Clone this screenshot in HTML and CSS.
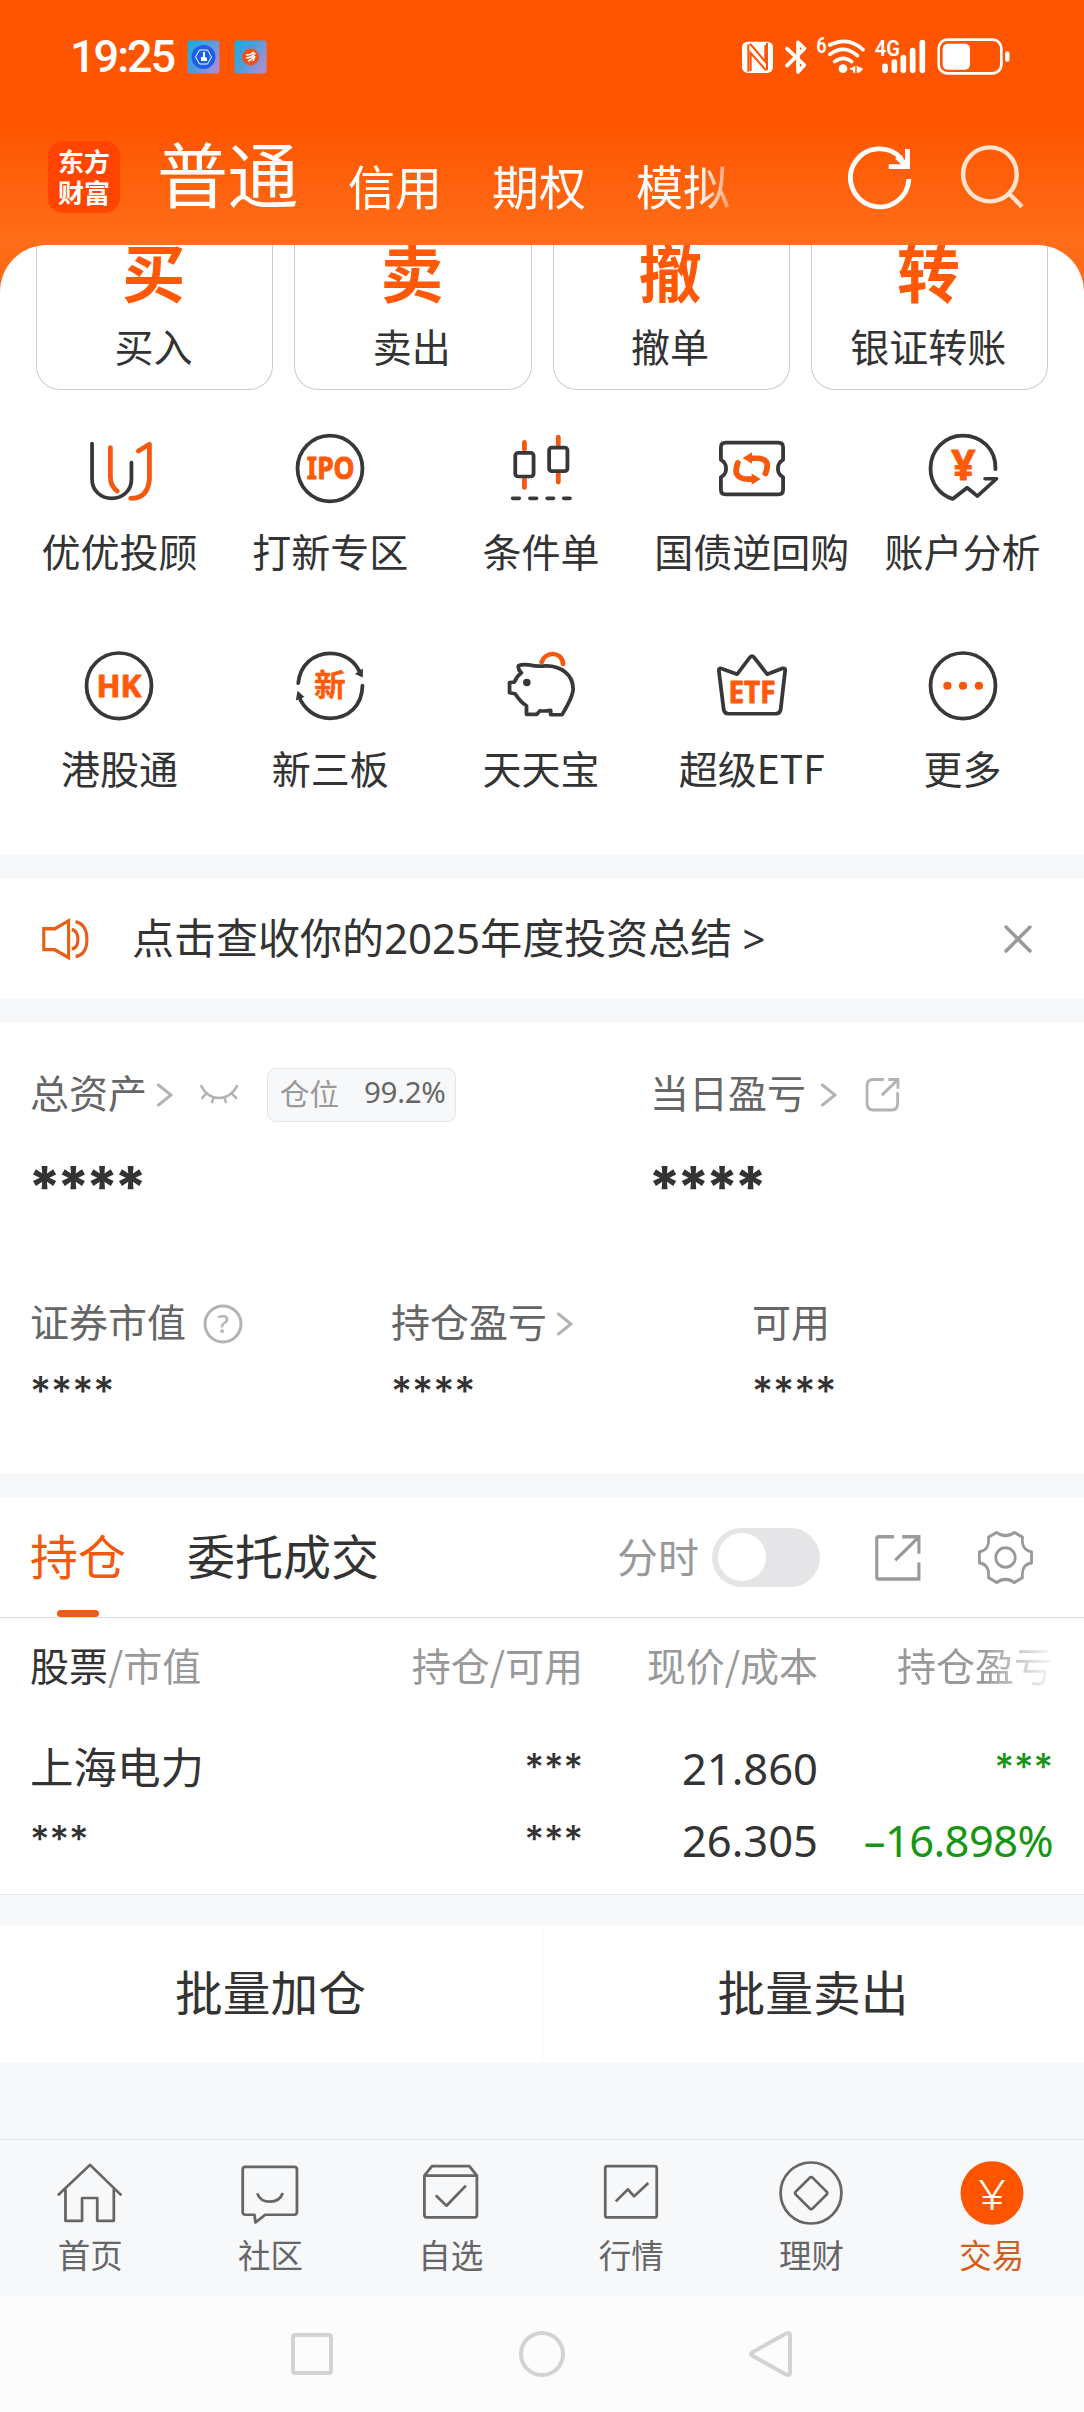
FILE: index.html
```html
<!DOCTYPE html>
<html lang="zh-CN">
<head>
<meta charset="utf-8">
<title>交易</title>
<link rel="stylesheet" href="styles.css">
</head>
<body>
<header class="hero">
  <div class="status">
    <span class="clock">19:25</span>
    <svg class="app-icons" viewBox="0 0 81 34">
      <defs>
        <linearGradient id="tile" x1="0" y1="0" x2="1" y2="0.6"><stop offset="0" stop-color="#12aee0"/><stop offset="0.5" stop-color="#4a9ddb"/><stop offset="1" stop-color="#a58fd2"/></linearGradient>
      </defs>
      <rect x="0.5" y="0.5" width="32" height="33" rx="3" fill="url(#tile)"/>
      <circle cx="16.5" cy="17" r="12" fill="#1d5fe8"/>
      <path d="M12.500 10h8l4 7-4 7h-8l-4-7z" fill="none" stroke="#fff"/>
      <path d="M16 12h2v5l2 1v3h-6v-4h2z" fill="#fff"/>
      <rect x="47.500" y="0.500" width="32" height="33" rx="3" fill="url(#tile)"/>
      <circle cx="63.500" cy="17" r="8.500" fill="#f2501d"/>
      <path d="M59 15q5 0 8-3M59 18q6 0 9-5M61 21q4-1 6-5M66 21l2-5" fill="none" stroke="#fff" stroke-width="1.500"/>
    </svg>
    <svg class="system-icons" viewBox="30 18 816 120">
      <rect x="36" y="32" width="93" height="94" rx="17" fill="#fff"/>
      <path d="M55 40V122M111 36V118M60 38L106 92V42M62 120V66L108 118" stroke="#ff5500" stroke-width="6" fill="none"/>
      <g fill="none" stroke="#fff" stroke-linecap="round" stroke-linejoin="round">
        <path d="M171 53L223 102L204 123V34L223 53L171 104" stroke-width="11"/>
        <path d="M299 42Q355 14 399 56M300 70Q343 38 382 74M314 92Q340 72 365 92" stroke-width="11"/>
        <path d="M465 106V118M493 93V118M520 80V118M548 59V118M577 35V118" stroke-width="17"/>
        <rect x="626" y="26" width="188" height="101" rx="26" stroke-width="8"/>
        <path d="M832 67V86" stroke-width="13"/>
      </g>
      <g fill="#fff">
        <circle cx="339" cy="113" r="13"/>
        <path d="M376 104V125H369V118L357 114ZM380 104L400 113L388 125H380Z"/>
        <rect x="638" y="38" width="82" height="78" rx="15"/>
        <text x="259" y="66" class="tiny" textLength="31" lengthAdjust="spacingAndGlyphs">6</text>
        <text x="434" y="75" class="tiny" textLength="76" lengthAdjust="spacingAndGlyphs">4G</text>
      </g>
    </svg>
  </div>
  <nav class="accounts">
    <div class="logo"><span>东方</span><span>财富</span></div>
    <div class="account-tabs">
      <span class="account current">普通</span>
      <span class="account">信用</span>
      <span class="account">期权</span>
      <span class="account">模拟</span>
    </div>
    <svg class="hero-icon refresh" viewBox="886 438 184 192" preserveAspectRatio="none" fill="none" stroke="#fff" stroke-width="14">
      <path d="M1061 537A84 87 0 1 1 1040 476"/><path d="M1057 447V500H1003"/><path d="M1028 470L1056 498" stroke-width="17"/>
    </svg>
    <svg class="hero-icon search" viewBox="1212 434 186 192" preserveAspectRatio="none" fill="none" stroke="#ffe3cf" stroke-width="13">
      <ellipse cx="1299" cy="522" rx="78" ry="81"/><path d="M1353 578L1392 619"/>
    </svg>
  </nav>
</header>

<main>
  <div class="sheet-back">
    <section class="sheet">
      <div class="quick">
        <div class="card"><b class="glyph">买</b><span class="label">买入</span></div>
        <div class="card"><b class="glyph">卖</b><span class="label">卖出</span></div>
        <div class="card"><b class="glyph">撤</b><span class="label">撤单</span></div>
        <div class="card"><b class="glyph">转</b><span class="label">银证转账</span></div>
      </div>
      <div class="tools">
        <div class="tool">
          <svg viewBox="237 97 220 220" preserveAspectRatio="none"><path class="ink" d="M269 132V240C269 275 296 297 326 297S383 275 383 240V189"/><path class="accent" d="M322 144V232Q322 260 342 275M403 154L435 134V240Q430 297 381 297"/></svg>
          <span class="label">优优投顾</span>
        </div>
        <div class="tool">
          <svg viewBox="847 97 220 220" preserveAspectRatio="none"><ellipse class="ink" cx="957" cy="207" rx="94" ry="99"/><text class="mark" x="890" y="240" font-size="93" textLength="138" lengthAdjust="spacingAndGlyphs">IPO</text></svg>
          <span class="label">打新专区</span>
        </div>
        <div class="tool">
          <svg viewBox="1457 97 220 220" preserveAspectRatio="none"><path class="accent" d="M1519 128V150M1519 240V264M1617 112V135M1617 223V248"/><rect class="ink" x="1492.500" y="160" width="53" height="71" rx="8"/><rect class="ink" x="1590.500" y="144" width="53" height="71" rx="8"/><path class="ink" d="M1485 297h19M1535 297h19M1585 297h18M1633 297h18"/></svg>
          <span class="label">条件单</span>
        </div>
        <div class="tool">
          <svg viewBox="501 97 220 220" preserveAspectRatio="none"><path class="ink" d="M535 129H687Q701 129 701 143V181Q686 189 686 207T701 233V271Q701 285 687 285H535Q521 285 521 271V233Q536 225 536 207T521 181V143Q521 129 535 129Z"/><path class="accent bold" d="M570 190Q552 238 600 239H612M650 222Q668 177 625 176H606"/><path class="solid" d="M584 175L611 158V193ZM636 239L610 222V256Z"/></svg>
          <span class="label">国债逆回购</span>
        </div>
        <div class="tool">
          <svg viewBox="1108 97 220 220" preserveAspectRatio="none"><path class="ink" d="M1312 209C1314 148 1270 108 1218 108S1124 150 1124 207C1124 252 1150 285 1188 299L1230 265L1260 290L1315 238H1282"/><text class="mark" x="1184" y="242" font-size="122" textLength="70" lengthAdjust="spacingAndGlyphs">¥</text></svg>
          <span class="label">账户分析</span>
        </div>
        <div class="tool">
          <svg viewBox="237 747 220 220" preserveAspectRatio="none"><ellipse class="ink" cx="347" cy="858" rx="94" ry="99"/><text class="mark" x="282" y="892" font-size="93" textLength="130" lengthAdjust="spacingAndGlyphs">HK</text></svg>
          <span class="label">港股通</span>
        </div>
        <div class="tool">
          <svg viewBox="847 747 220 220" preserveAspectRatio="none"><path class="ink" d="M865 850C870 795 910 760 957 760C1000 760 1032 785 1045 822M1051 857C1050 918 1010 956 957 956C912 956 880 925 867 890"/><path class="dark" d="M1052 806V833L1029 822ZM863 873L883 892L858 902Z"/><text class="mark cjk" x="911" y="890" font-size="92">新</text></svg>
          <span class="label">新三板</span>
        </div>
        <div class="tool">
          <svg viewBox="1457 747 220 220" preserveAspectRatio="none"><path class="ink" d="M1502 797Q1515 791 1545 797Q1565 800 1580 798C1625 797 1660 825 1660 867Q1660 890 1628 945H1595V932Q1575 935 1564 933L1555 944H1525V918Q1510 910 1492 882L1476 879V848L1490 847Q1496 830 1510 819Q1499 808 1502 797Z"/><circle class="dark" cx="1526" cy="848" r="11"/><path class="accent" d="M1569 786C1580 754 1626 752 1631 792"/></svg>
          <span class="label">天天宝</span>
        </div>
        <div class="tool">
          <svg viewBox="501 747 220 220" preserveAspectRatio="none"><path class="ink" d="M522 806L568 823L605 772Q611 766 617 772L655 823L700 805Q708 804 707 812L694 929Q692 942 680 942H543Q531 942 529 929L515 812Q515 804 522 806"/><text class="mark" x="543" y="909" font-size="91" textLength="136" lengthAdjust="spacingAndGlyphs">ETF</text></svg>
          <span class="label">超级ETF</span>
        </div>
        <div class="tool">
          <svg viewBox="1108 747 220 220" preserveAspectRatio="none"><ellipse class="ink" cx="1218" cy="858" rx="94" ry="99"/><circle class="solid" cx="1173" cy="858" r="12"/><circle class="solid" cx="1218" cy="858" r="12"/><circle class="solid" cx="1264" cy="858" r="12"/></svg>
          <span class="label">更多</span>
        </div>
      </div>
    </section>
  </div>

  <section class="notice">
    <svg class="speaker" viewBox="120 200 142 116" preserveAspectRatio="none" fill="none" stroke="#e85f18" stroke-width="9"><path d="M128 231H160L200 210V307L160 286H128ZM209 233Q227 236 227 259T209 284M220 212Q253 219 253 259T220 304"/></svg>
    <p class="notice-text">点击查收你的<span class="num">2025</span>年度投资总结<span class="num more"> &gt;</span></p>
    <svg class="close" viewBox="0 0 28 28" stroke="#999" stroke-width="3.500" stroke-linecap="round"><path d="M2 2l24 24M26 2L2 26"/></svg>
  </section>

  <section class="assets">
    <div class="totals">
      <div>
        <div class="caption"><span class="name">总资产</span>
          <svg class="chevron" viewBox="0 0 16 24"><path d="M1.500 2L14 12L1.500 22"/></svg>
          <svg class="eye" viewBox="576 644 116 54" preserveAspectRatio="none" fill="none" stroke="#b3b3b3" stroke-width="7"><path d="M581 647Q600 680 634 680T688 647M598 668L583 682M618 680L613 693M650 680L655 693M670 668L686 682"/></svg>
          <span class="tag">仓位<span class="num">99.2%</span></span>
        </div>
        <div class="big-stars">****</div>
      </div>
      <div>
        <div class="caption"><span class="name">当日盈亏</span>
          <svg class="chevron wide" viewBox="0 0 16 24"><path d="M1.500 2L14 12L1.500 22"/></svg>
          <svg class="open" viewBox="939 618 102 96" preserveAspectRatio="none" fill="none" stroke="#b3b3b3" stroke-width="8"><path d="M994 627H962Q945 627 945 644V688Q945 706 962 706H1017Q1034 706 1034 690V660M1007 627H1035V651M1034 628L988 668"/></svg>
        </div>
        <div class="big-stars">****</div>
      </div>
    </div>
    <div class="details">
      <div>
        <div class="caption small"><span class="name">证券市值</span>
          <svg class="help" viewBox="0 0 40 40"><circle cx="20" cy="20" r="18" fill="none" stroke="#b3b3b3" stroke-width="3"/><text x="20" y="29" text-anchor="middle">?</text></svg>
        </div>
        <div class="stars">****</div>
      </div>
      <div>
        <div class="caption small"><span class="name">持仓盈亏</span><svg class="chevron" viewBox="0 0 16 24"><path d="M1.500 2L14 12L1.500 22"/></svg></div>
        <div class="stars">****</div>
      </div>
      <div>
        <div class="caption small"><span class="name">可用</span></div>
        <div class="stars">****</div>
      </div>
    </div>
  </section>

  <section class="holdings">
    <div class="tabs">
      <div class="tab selected">持仓</div>
      <div class="tab">委托成交</div>
      <span class="minute">分时</span>
      <span class="switch"><i class="knob"></i></span>
      <svg class="export" viewBox="960 162 140 128" preserveAspectRatio="none" fill="none" stroke="#999" stroke-width="9"><path d="M1018 172H973Q968 172 968 177V277Q968 282 973 282H1091V239M1042 172H1091V216M1090 173L1022 233"/></svg>
      <svg class="gear" viewBox="1260 154 164 148" preserveAspectRatio="none" fill="none" stroke="#999" stroke-width="8" stroke-linejoin="round"><path d="M1317 163C1332 174 1352 174 1367 163L1391 175C1388 196 1396 210 1417 213V242C1396 245 1388 259 1391 280L1367 293C1352 282 1332 282 1317 293L1293 280C1296 259 1288 245 1267 242V213C1288 210 1296 196 1293 175Z"/><ellipse cx="1342" cy="228" rx="28" ry="25.500"/></svg>
    </div>
    <div class="table head">
      <span><b>股票</b>/市值</span><span>持仓/可用</span><span>现价/成本</span><span class="fading">持仓盈亏</span>
    </div>
    <div class="table row">
      <span class="stock">上海电力</span><span class="mask">***</span><span class="num">21.860</span><span class="mask loss">***</span>
    </div>
    <div class="table row">
      <span class="mask">***</span><span class="mask">***</span><span class="num">26.305</span><span class="num loss percent">–16.898%</span>
    </div>
  </section>

  <section class="batch"><div class="batch-item">批量加仓</div><div class="batch-item">批量卖出</div></section>
</main>

<nav class="tabbar">
  <div class="entry"><svg viewBox="164.500 274.500 191 191" preserveAspectRatio="none"><path d="M167 377L260 286L351 377M189 358V453H237V385H281V453H329V358"/></svg>首页</div>
  <div class="entry"><svg viewBox="684.500 274.500 191 191" preserveAspectRatio="none"><path d="M709 292H850Q858 292 858 300V427Q858 435 850 435H766L738 458L735 435H709Q701 435 701 427V300Q701 292 709 292ZM743 371Q752 396 780 396T817 370"/></svg>社区</div>
  <div class="entry"><svg viewBox="1207.500 274.500 191 191" preserveAspectRatio="none"><path d="M1226 318L1248 290H1356L1378 318V436Q1378 443 1371 443H1233Q1226 443 1226 436ZM1226 318H1378M1259 377L1290 408L1346 348"/></svg>自选</div>
  <div class="entry"><svg viewBox="162.500 274.500 191 191" preserveAspectRatio="none"><rect x="183.500" y="290" width="149" height="153" rx="6"/><path d="M214 395L249 359L267 380L308 340"/></svg>行情</div>
  <div class="entry"><svg viewBox="686.500 274.500 191 191" preserveAspectRatio="none"><ellipse cx="782" cy="370" rx="88" ry="91"/><path d="M778 325Q782 320 787 325L827 366Q831 370 827 375L787 416Q782 421 778 416L738 375Q734 370 738 366Z"/></svg>理财</div>
  <div class="entry active"><svg viewBox="1210.500 274.500 191 191" preserveAspectRatio="none"><ellipse class="disc" cx="1306" cy="370" rx="91" ry="95"/><text x="1266" y="420" textLength="80" lengthAdjust="spacingAndGlyphs">¥</text></svg>交易</div>
</nav>

<footer class="navkeys">
  <svg viewBox="0 0 50 50"><rect x="6" y="6" width="38" height="38" rx="2"/></svg>
  <svg viewBox="0 0 50 50"><circle cx="25" cy="25" r="21"/></svg>
  <svg viewBox="0 0 50 50"><path d="M5 23.500L39 4.500Q43 3 43 6V44Q43 47 39 45.500L5 26.500Q3 25 5 23.500Z"/></svg>
</footer>
</body>
</html>
```
FILE: styles.css
```css
* { box-sizing: border-box; }
body {
  margin: 0;
  width: 1084px;
  background: #f7f8fa;
  color: #333;
  font-family: "Noto Sans CJK SC", sans-serif;
  font-size: 39px;
  line-height: 50px;
}
svg { display: block; flex: none; }
p { margin: 0; }
.num { font-family: "Noto Sans", sans-serif; }

/* header */
.hero {
  height: 245px;
  background: linear-gradient(#ff5500 0, #ff5500 125px, #ff6e1a 245px);
  color: #fff;
}
.status { display: flex; align-items: center; height: 113px; padding-left: 70px; }
.clock {
  width: 117px;
  font: 500 45px/60px Roboto, sans-serif;
  letter-spacing: -2px;
}
.app-icons { width: 81px; height: 34px; }
.system-icons { width: 272px; height: 40px; margin-left: 472px; }
.tiny { font: 600 65px Roboto, sans-serif; }

.accounts { display: flex; align-items: flex-start; padding: 28px 0 0 48px; }
.logo {
  display: flex;
  flex-direction: column;
  align-items: center;
  width: 72px;
  height: 72px;
  padding-top: 4px;
  border-radius: 15px;
  background: #ff4500;
  font-size: 26px;
  font-weight: 700;
  line-height: 31px;
}
.account-tabs {
  display: flex;
  align-items: flex-start;
  gap: 50px;
  width: 575px;
  margin: -10px 0 0 37px;
  -webkit-mask-image: linear-gradient(90deg, #000 540px, transparent 595px);
  mask-image: linear-gradient(90deg, #000 540px, transparent 595px);
}
.account { margin-top: 14px; font-size: 47px; line-height: 80px; }
.account.current { margin-top: 0; font-size: 71px; letter-spacing: -0.5px; }
.hero-icon { width: 64px; height: 64px; }
.refresh { margin: 5px 48px 0 116px; }
.search { margin-top: 4px; }

/* shortcuts */
.sheet-back { background: #ff6c18; }
.sheet {
  height: 610px;
  overflow: hidden;
  border-radius: 47px 47px 0 0;
  background: #fff;
}
.quick { display: grid; grid-template-columns: repeat(4, 1fr); gap: 21px; padding: 0 36px; }
.card {
  display: flex;
  flex-direction: column;
  align-items: center;
  height: 145px;
  padding-right: 2px;
  border: 1px solid #ccc;
  border-top: 0;
  border-radius: 0 0 24px 24px;
}
.glyph { color: #ff5806; font-size: 63px; line-height: 50px; }
.card .label { margin-top: 26px; line-height: 48px; }
.tools {
  display: grid;
  grid-template-columns: repeat(5, 1fr);
  row-gap: 74px;
  padding: 42px 16px 0 14px;
}
.tool { display: flex; flex-direction: column; align-items: center; gap: 20px; white-space: nowrap; }
.tool svg { width: 76px; height: 73px; }
.ink, .accent { fill: none; stroke: #383838; stroke-width: 11; stroke-linecap: round; stroke-linejoin: round; }
.accent { stroke: #f5590f; stroke-width: 14; }
.bold { stroke-width: 17; }
.solid { fill: #f5590f; }
.dark { fill: #383838; }
.mark { fill: #ff5a0a; stroke: #ff5a0a; stroke-width: 3; stroke-linejoin: round; font-family: "Noto Sans", sans-serif; font-weight: 700; }
.cjk { font-family: "Noto Sans CJK SC", sans-serif; stroke-width: 1; }

/* notice */
.notice {
  display: flex;
  align-items: center;
  height: 120px;
  margin: 24px 0;
  padding: 0 52px 0 41px;
  background: #fff;
}
.speaker { width: 49px; height: 44px; }
.notice-text { flex: 1; margin: -4px 0 0 42px; font-size: 42px; white-space: pre; }
.more { font-size: 40px; }
.close { width: 28px; height: 28px; }

/* assets */
.assets { height: 450px; padding: 45px 0 0 30px; background: #fff; color: #666; }
.totals { display: grid; grid-template-columns: 620px 1fr; }
.details { display: grid; grid-template-columns: repeat(3, 361px); width: 1053px; margin-top: 90px; }
.caption { display: flex; align-items: center; height: 53px; white-space: nowrap; }
.caption.small { height: 40px; }
.name { margin-top: -8px; }
.chevron { width: 16px; height: 24px; margin-left: 10px; fill: none; stroke: #b3b3b3; stroke-width: 3; stroke-linecap: round; }
.chevron.wide { margin-left: 15px; }
.eye { width: 40px; height: 21px; margin-left: 26px; }
.tag {
  display: flex;
  align-items: center;
  width: 189px;
  height: 54px;
  margin-left: 28px;
  padding: 0 0 5px 12px;
  border: 1px solid #e4e5e7;
  border-radius: 9px;
  background: #f7f8fa;
  color: #999;
  font-size: 29.500px;
}
.tag .num { margin-left: 25px; color: #666; font-size: 29.500px; letter-spacing: -0.3px; }
.open { width: 35px; height: 37px; margin-left: 28px; }
.help { width: 40px; height: 40px; margin-left: 17px; fill: #b3b3b3; font: 500 26px "Noto Sans", sans-serif; }
.big-stars { margin: 36px 0 -3px -2px; color: #333; font: 800 57px/60px Inter, sans-serif; letter-spacing: -4.500px; }
.stars { margin-top: 25px; color: #333; font: 500 40.500px/46px Inter, sans-serif; }

/* holdings */
.holdings { height: 398px; margin-top: 24px; overflow: hidden; border-bottom: 1px solid #e9eaec; background: #fff; }
.tabs {
  display: flex;
  align-items: center;
  height: 121px;
  padding-left: 30px;
  border-bottom: 1px solid #ddd;
}
.tab { position: relative; height: 120px; margin-right: 61px; font-size: 48px; line-height: 114px; }
.selected { color: #f2590e; }
.selected::after {
  content: "";
  position: absolute;
  left: 27px;
  bottom: 0;
  width: 42px;
  height: 7px;
  border-radius: 3.500px;
  background: #ee5b12;
}
.minute { margin: -5px 13px 0 177px; color: #999; font-size: 41px; }
.switch { width: 108px; height: 59px; padding: 5.500px 6px; border-radius: 30px; background: #e5e5e7; }
.knob { display: block; width: 48px; height: 48px; border-radius: 50%; background: #fff; }
.export { width: 48px; height: 49px; margin-left: 54px; }
.gear { width: 57px; height: 57px; margin-left: 55px; }

.table { display: grid; grid-template-columns: 253px 300px 235px 235px; padding: 0 31px 0 30px; text-align: right; white-space: nowrap; }
.table > :first-child { text-align: left; }
.head { margin-bottom: 22px; color: #999; line-height: 92px; }
.head b { color: #333; font-weight: 400; }
.fading {
  -webkit-mask-image: linear-gradient(90deg, #000 165px, transparent 240px);
  mask-image: linear-gradient(90deg, #000 165px, transparent 240px);
}
.row { height: 72px; font-size: 43.500px; line-height: 72px; }
.stock { line-height: 68px; }
.mask { font: 500 37.500px/72px Inter, sans-serif; }
.loss { color: #159615; }
.percent { letter-spacing: -0.6px; }

.batch { display: grid; grid-template-columns: 1fr 1fr; margin: 30px 0 76px; background: #fff; }
.batch-item { height: 138px; padding-right: 1px; font-size: 47.700px; line-height: 131px; text-align: center; }
.batch-item + .batch-item { border-left: 1px solid #f6f6f6; }

/* bottom navigation */
.tabbar {
  display: grid;
  grid-template-columns: repeat(6, 1fr);
  height: 157px;
  padding: 21px 2px 0 0;
  border-top: 1px solid #e2e3e5;
  background: #f7f8fa;
}
.entry { display: flex; flex-direction: column; align-items: center; gap: 9px; color: #666; font-size: 32.500px; line-height: 40px; }
.entry svg { width: 66px; height: 64px; fill: none; stroke: #666; stroke-width: 8; stroke-linejoin: round; }
.entry.active { color: #d65c1c; }
.entry.active svg { fill: #fff; stroke: none; }
.entry .disc { fill: #ff5500; }
.entry text { font: 300 124px "Noto Sans", sans-serif; }

.navkeys { display: flex; justify-content: center; gap: 180px; height: 116px; padding-top: 33px; background: #fcfcfc; }
.navkeys svg { width: 50px; height: 50px; fill: none; stroke: #d2d2d2; stroke-width: 4; }
```
